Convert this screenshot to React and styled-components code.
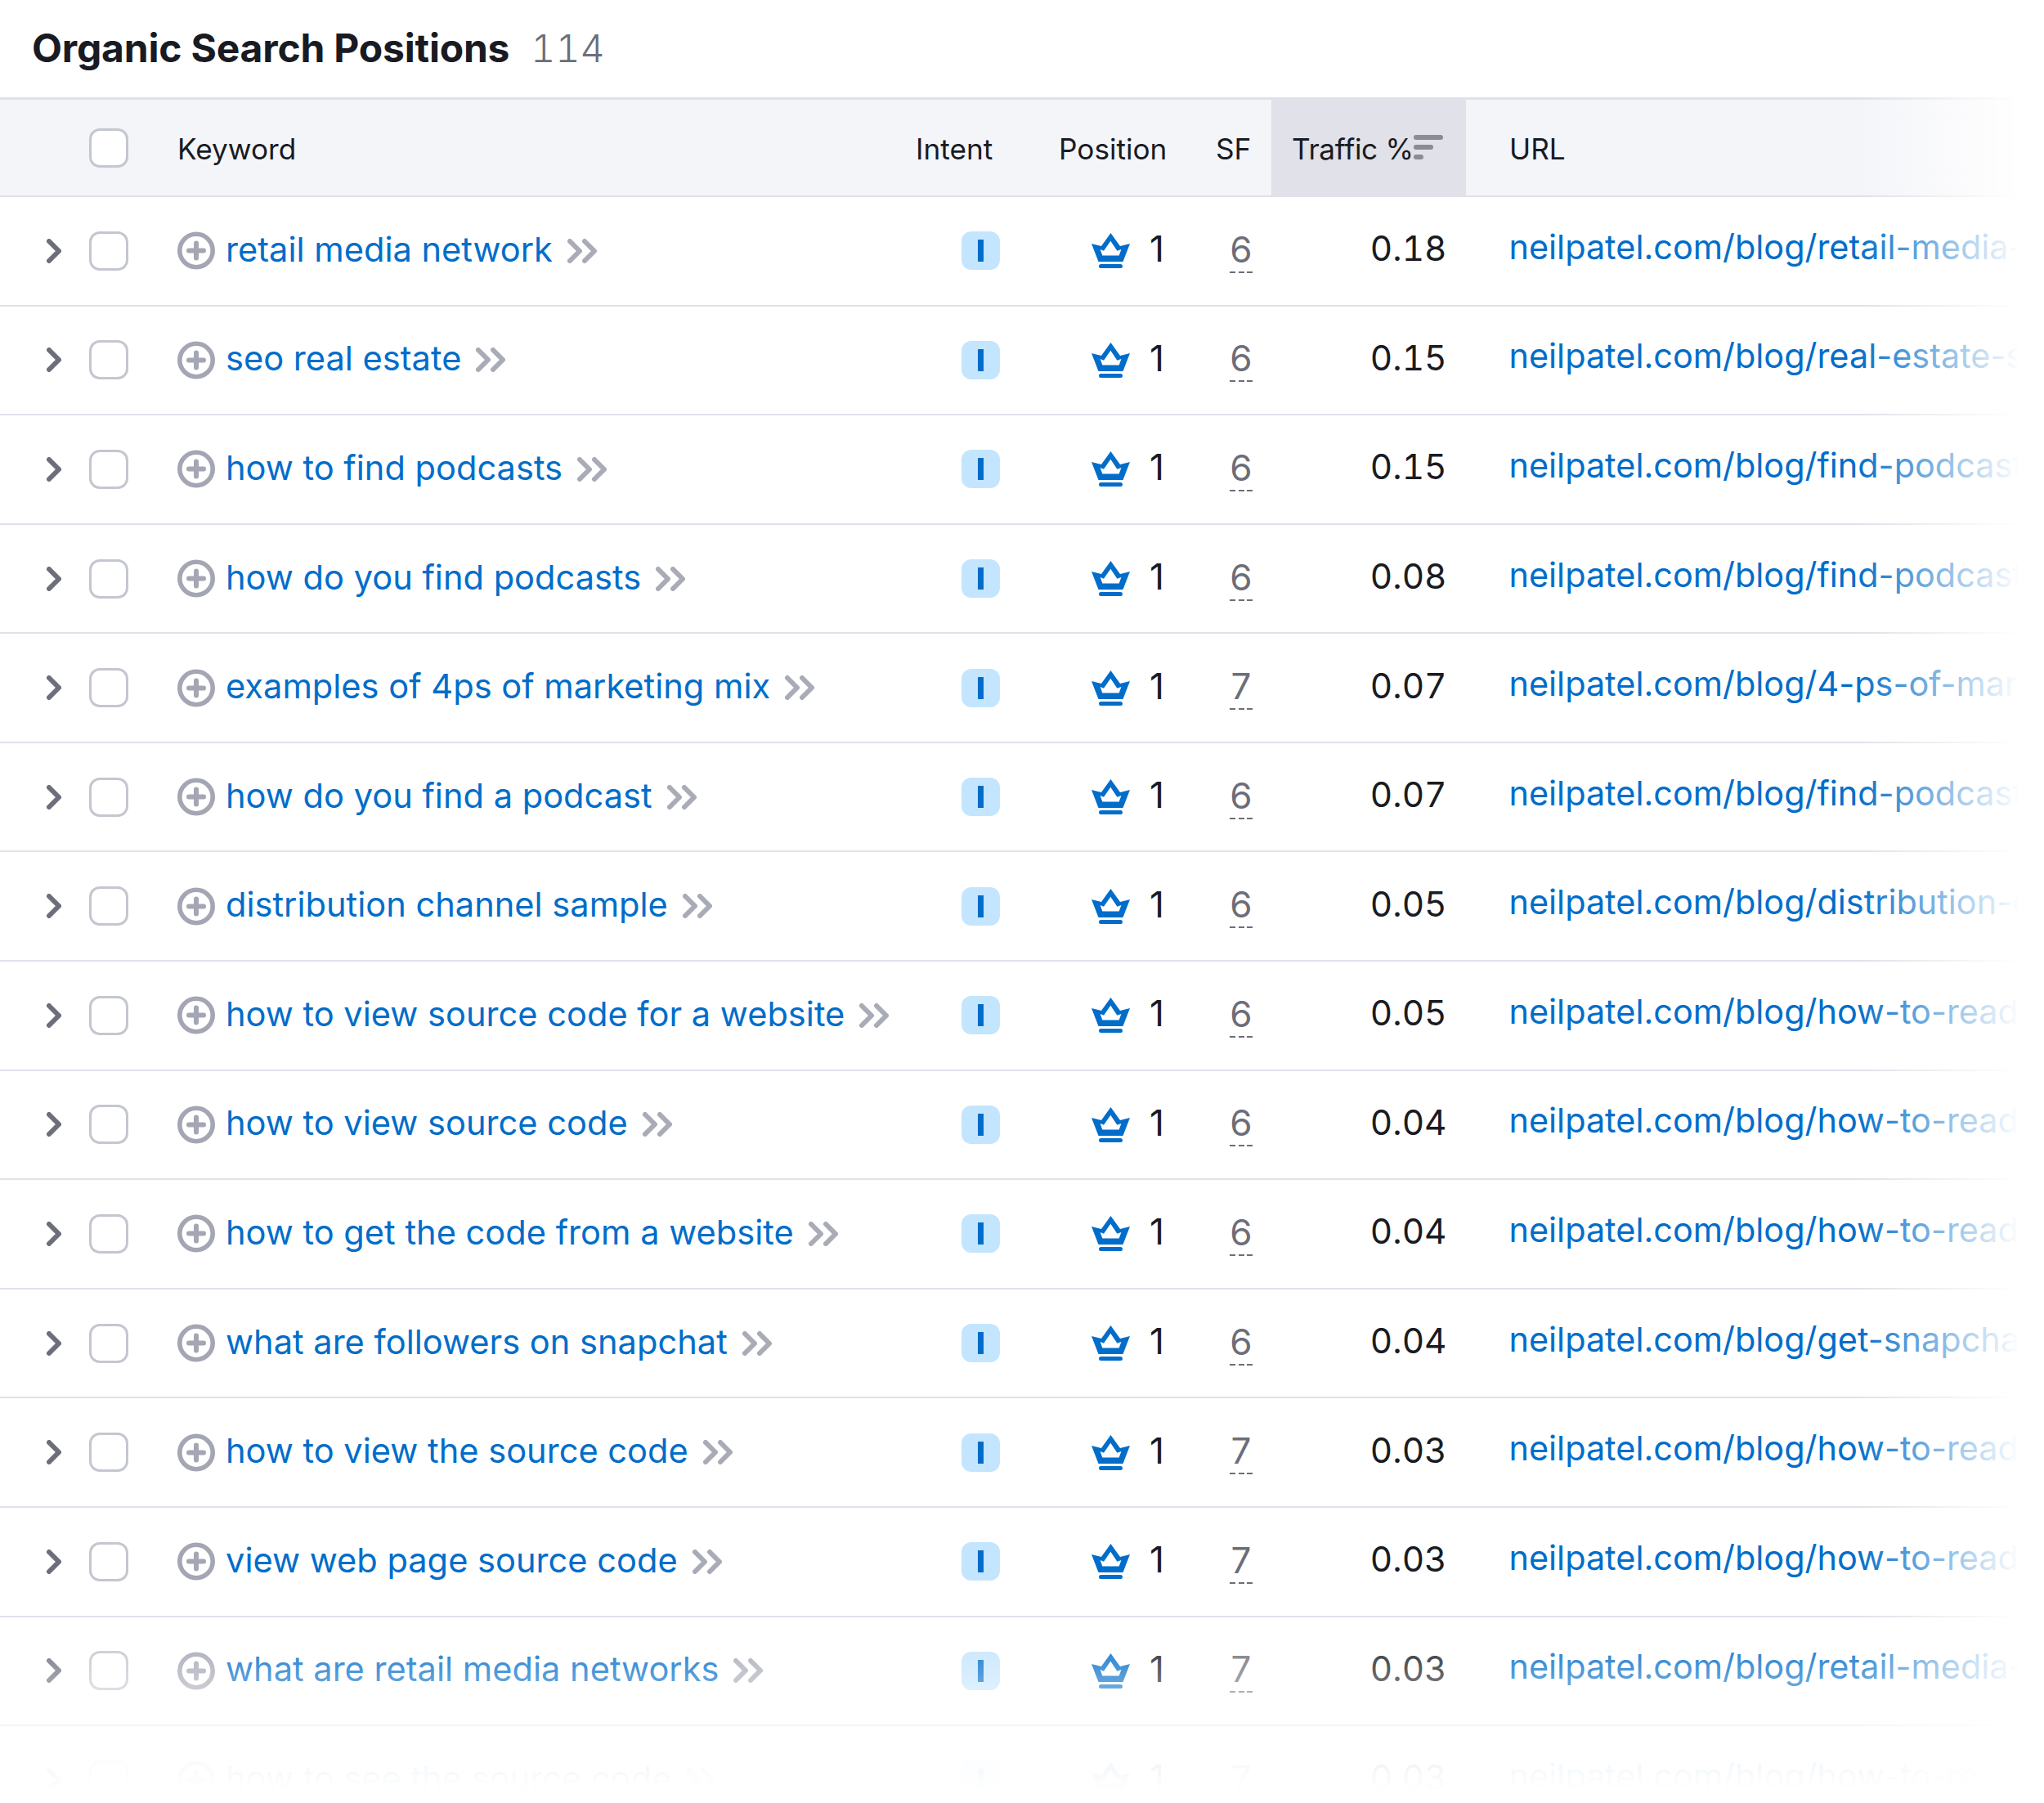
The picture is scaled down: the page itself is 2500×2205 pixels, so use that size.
import React from "react";
import styled, { createGlobalStyle } from "styled-components";

const Global = createGlobalStyle`
  html, body { margin: 0; padding: 0; background: #fff; }
  body { font-family: Inter, "Liberation Sans", sans-serif; color: #191b23; }
`;

const Page = styled.div`
  position: relative;
  width: 2500px;
  height: 2205px;
  overflow: hidden;
  background: #fff;
`;

const TitleBar = styled.div`
  height: 119px;
  box-sizing: border-box;
  display: flex;
  align-items: baseline;
  gap: 26px;
  padding: 31px 0 0 39px;
`;
const Title = styled.h1`
  margin: 0;
  font-size: 48px;
  line-height: 56px;
  font-weight: 700;
  letter-spacing: -0.2px;
  color: #191b23;
`;
const Count = styled.span`
  font-size: 46.5px;
  line-height: 56px;
  font-weight: 300;
  font-variant-numeric: tabular-nums;
  color: #6c6e79;
`;

const Head = styled.div`
  display: grid;
  grid-template-columns: 109px 108px 903px 175px 192px 68px 238px 1fr;
  height: 122px;
  box-sizing: border-box;
  border-top: 3px solid #e0e1e9;
  border-bottom: 2px solid #e0e1e9;
  background: #f4f5f9;
  font-size: 35.2px;
  line-height: 44px;
`;
const HeadCell = styled.div`
  display: flex;
  align-items: center;
  padding-top: ${(p) => (p.$check ? 0 : 2)}px;
  padding-left: ${(p) => p.$pad || 0}px;
  background: ${(p) => (p.$active ? "#e0e1e9" : "transparent")};
  letter-spacing: ${(p) => (p.$active ? "-0.3px" : "0")};
`;
const SortWrap = styled.span`
  display: flex;
  margin: -4px 0 0 0;
`;

const Row = styled.div`
  display: grid;
  grid-template-columns: 109px 108px 959px 159px 169px 96px 169.5px 76px 1fr;
  align-items: center;
  height: 133.58px;
  box-sizing: border-box;
  border-bottom: 2px solid #e0e1e9;
  font-size: 44px;
  line-height: 54px;
`;
const Cell = styled.div`
  display: flex;
  align-items: center;
  min-width: 0;
  white-space: nowrap;
`;
const ToggleCell = styled(Cell)`
  padding-left: 57px;
`;
const Box = styled.span`
  display: block;
  width: 48px;
  height: 48px;
  box-sizing: border-box;
  border: 3px solid #c4c7cf;
  border-radius: 13px;
  background: #fff;
`;
const KeywordCell = styled(Cell)`
  gap: 13px;
`;
const Keyword = styled.a`
  color: #006dca;
  font-size: 41.6px;
  margin-right: 5px;
  margin-top: -4px;
`;
const IntentBadge = styled.span`
  display: flex;
  align-items: center;
  justify-content: center;
  width: 47px;
  height: 47px;
  border-radius: 12px;
  background: #c4e5fe;
  &::before {
    content: "";
    width: 7px;
    height: 27px;
    background: #006dca;
  }
`;
const PositionCell = styled(Cell)`
  gap: 24px;
`;
const Rank = styled.span`
  margin-top: -5px;
`;
const SfValue = styled.span`
  display: block;
  width: 28px;
  margin-top: -2px;
  padding-bottom: 2px;
  text-align: center;
  color: #6c6e79;
  background: repeating-linear-gradient(90deg, #6c6e79 0 7px, transparent 7px 10.5px) bottom / 100% 2px no-repeat;
`;
const Traffic = styled(Cell)`
  justify-content: flex-end;
  margin-top: -5px;
  font-size: 42.3px;
  font-variant-numeric: tabular-nums;
`;
const Url = styled.a`
  grid-column: 9;
  color: #006dca;
  font-size: 41.4px;
  white-space: nowrap;
  margin-top: -10px;
`;

const FadeRight = styled.div`
  position: absolute;
  top: 110px;
  right: 0;
  bottom: 0;
  width: 230px;
  background: linear-gradient(90deg, rgba(255, 255, 255, 0) 0, #fff 200px);
`;
const FadeBottom = styled.div`
  position: absolute;
  left: 0;
  right: 0;
  bottom: 0;
  height: 220px;
  background: linear-gradient(
    180deg,
    rgba(255, 255, 255, 0) 0,
    rgba(255, 255, 255, 0.3) 60px,
    rgba(255, 255, 255, 0.95) 170px,
    #fff 205px
  );
`;

const Chevron = () => (
  <svg width="18" height="30" viewBox="0 0 18 30" fill="none" stroke="#6c6e79" strokeWidth="6" strokeLinecap="round" strokeLinejoin="round">
    <path d="M3 3l12 12L3 27" />
  </svg>
);
const DoubleChevron = () => (
  <svg width="36" height="30" viewBox="0 0 36 30" fill="none" stroke="#a9abb6" strokeWidth="6" strokeLinecap="round" strokeLinejoin="round">
    <path d="M3 3l12 12L3 27" />
    <path d="M21 3l12 12-12 12" />
  </svg>
);
const PlusCircle = () => (
  <svg width="46" height="47" viewBox="0 0 46 47" fill="none" stroke="#a4a6b4">
    <circle cx="23" cy="23.5" r="20.2" strokeWidth="5.6" />
    <path d="M14 23.5h18M23 14.500v18" strokeWidth="6" strokeLinecap="round" />
  </svg>
);
const Crown = () => (
  <svg width="47" height="43" viewBox="0 0 47 43" fill="#006dca">
    <path
      fillRule="evenodd"
      d="M23.5 0L35 16l12-3-8.500 22h-30L0 13l12 3L23.500 0zM23.500 9.500L15 21.700l-4.300-1.700 2.600 7.600h20.400l2.700-7.600-5 1.700-8.200-12.200z"
    />
    <rect x="9" y="38" width="29" height="5" rx="2.5" />
  </svg>
);
const SortIcon = () => (
  <svg width="36" height="30" viewBox="0 0 36 30" fill="#8b8c92">
    <rect width="36" height="6" rx="3" />
    <rect y="12" width="24" height="6" rx="3" />
    <rect y="24" width="12" height="6" rx="3" />
  </svg>
);

const rows = [
  ["retail media network", "6", "0.18", "retail-media-networks/"],
  ["seo real estate", "6", "0.15", "real-estate-seo/"],
  ["how to find podcasts", "6", "0.15", "find-podcasts/"],
  ["how do you find podcasts", "6", "0.08", "find-podcasts/"],
  ["examples of 4ps of marketing mix", "7", "0.07", "4-ps-of-marketing/"],
  ["how do you find a podcast", "6", "0.07", "find-podcasts/"],
  ["distribution channel sample", "6", "0.05", "distribution-channels/"],
  ["how to view source code for a website", "6", "0.05", "how-to-read-source-code/"],
  ["how to view source code", "6", "0.04", "how-to-read-source-code/"],
  ["how to get the code from a website", "6", "0.04", "how-to-read-source-code/"],
  ["what are followers on snapchat", "6", "0.04", "get-snapchat-followers/"],
  ["how to view the source code", "7", "0.03", "how-to-read-source-code/"],
  ["view web page source code", "7", "0.03", "how-to-read-source-code/"],
  ["what are retail media networks", "7", "0.03", "retail-media-networks/"],
  ["how to see the source code", "7", "0.03", "how-to-read-source-code/"],
];

export default function App() {
  return (
    <Page>
      <Global />
      <TitleBar>
        <Title>Organic Search Positions</Title>
        <Count>114</Count>
      </TitleBar>
      <Head>
        <HeadCell />
        <HeadCell $check><Box /></HeadCell>
        <HeadCell>Keyword</HeadCell>
        <HeadCell>Intent</HeadCell>
        <HeadCell>Position</HeadCell>
        <HeadCell>SF</HeadCell>
        <HeadCell $active $pad={25}>Traffic %<SortWrap><SortIcon /></SortWrap></HeadCell>
        <HeadCell $pad={53}>URL</HeadCell>
      </Head>
      {rows.map(([keyword, sf, traffic, slug], i) => (
        <Row key={i}>
          <ToggleCell><Chevron /></ToggleCell>
          <Cell><Box /></Cell>
          <KeywordCell>
            <PlusCircle />
            <Keyword>{keyword}</Keyword>
            <DoubleChevron />
          </KeywordCell>
          <Cell><IntentBadge /></Cell>
          <PositionCell>
            <Crown />
            <Rank>1</Rank>
          </PositionCell>
          <Cell><SfValue>{sf}</SfValue></Cell>
          <Traffic>{traffic}</Traffic>
          <Url>neilpatel.com/blog/{slug}</Url>
        </Row>
      ))}
      <FadeRight />
      <FadeBottom />
    </Page>
  );
}
